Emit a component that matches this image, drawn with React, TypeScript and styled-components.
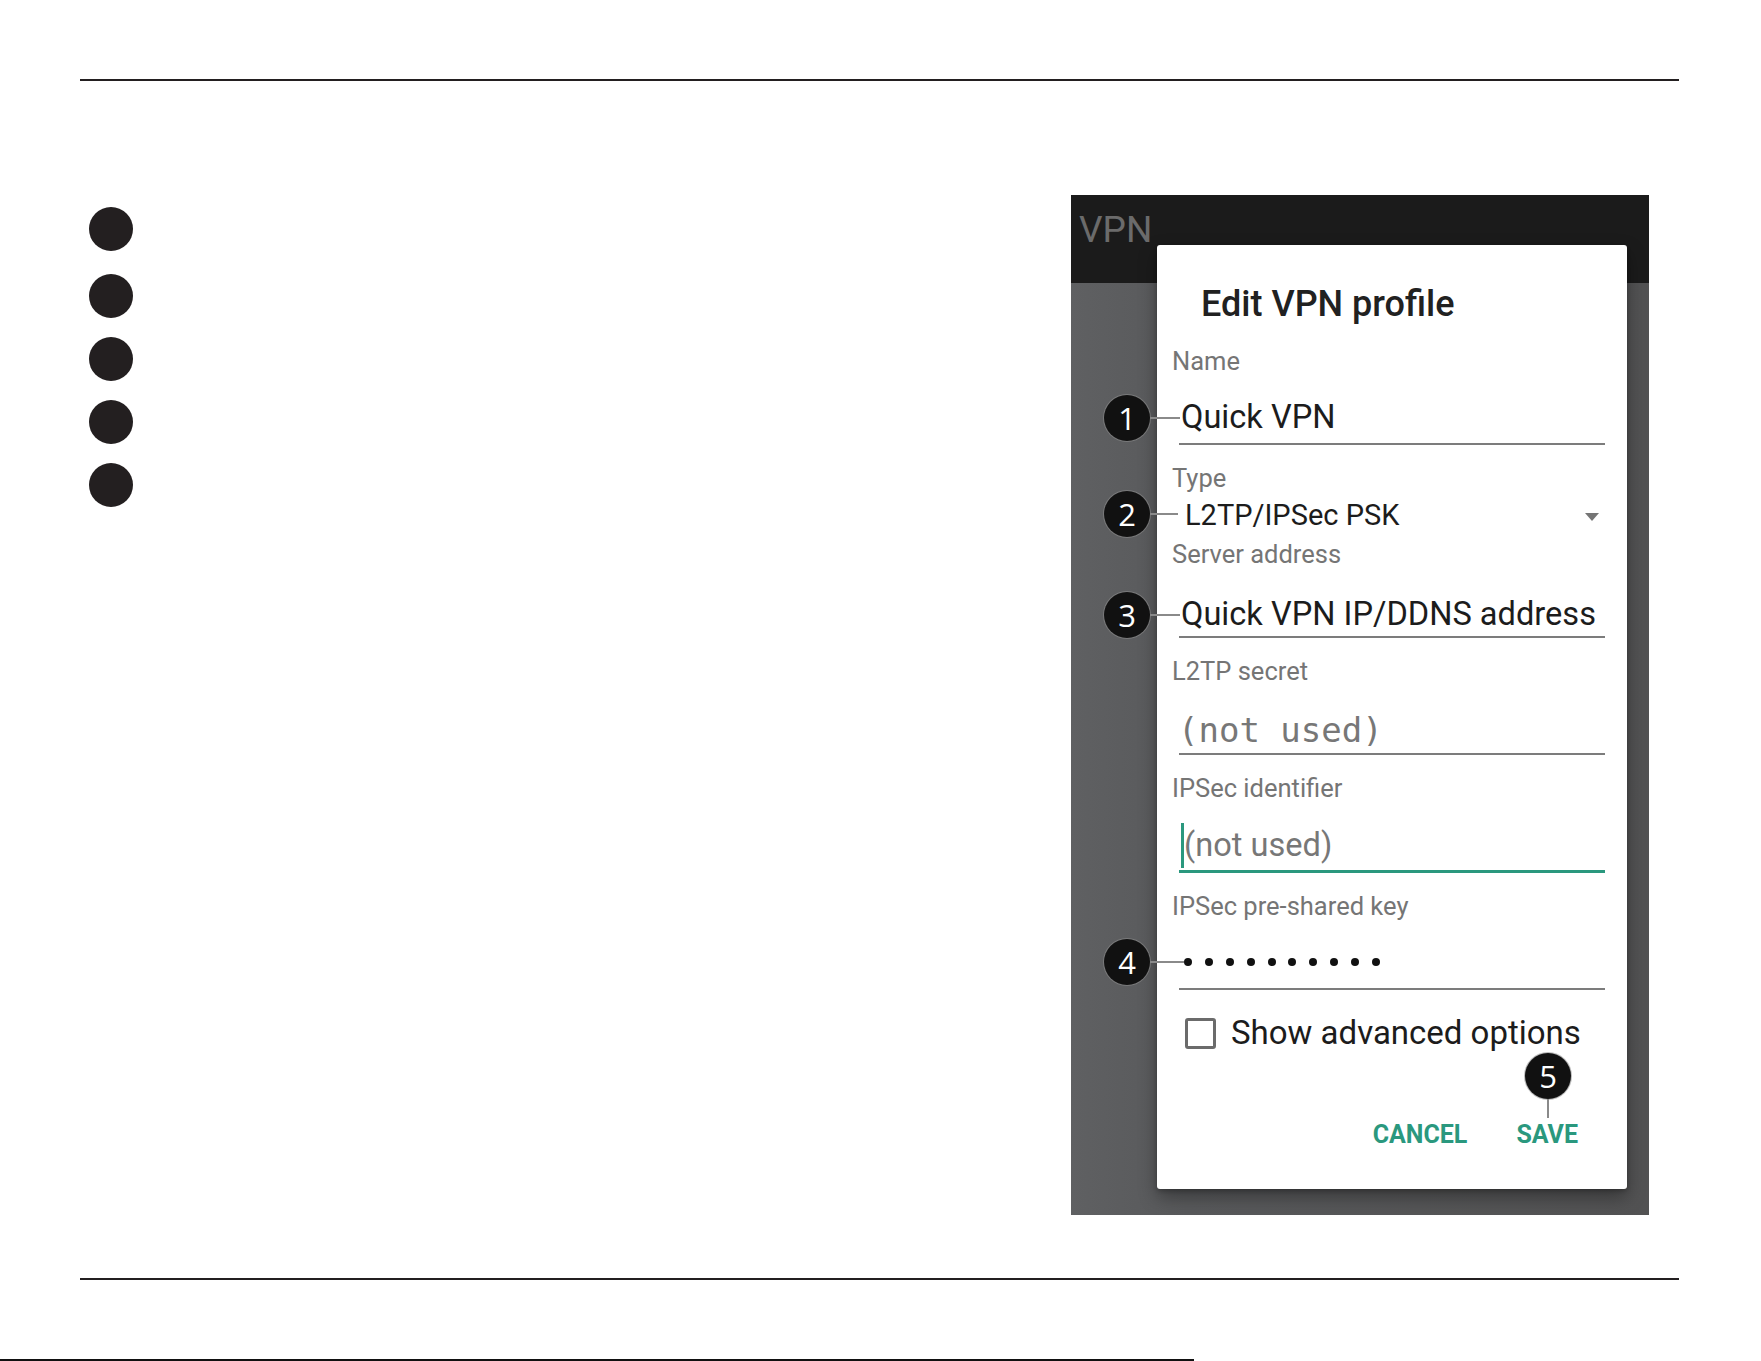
import styled, { createGlobalStyle } from "styled-components"

const GlobalStyle = createGlobalStyle`
  html, body {
    margin: 0;
    padding: 0;
    background: #fff;
  }
  body {
    font-family: Roboto, "Liberation Sans", sans-serif;
  }
`

const teal = "#2a987e"

const Sheet = styled.div`
  width: 1761px;
  height: 1361px;
  display: flex;
  flex-direction: column;
  overflow: hidden;
  background: #fff;
`

const Frame = styled.div`
  padding: 79px 82px 0 80px;
  display: flex;
  flex-direction: column;
`

const Rule = styled.div<{ $gap?: number }>`
  height: 2px;
  background: #231f20;
  margin-top: ${(p) => p.$gap ?? 0}px;
`

const Body = styled.div`
  display: flex;
  justify-content: space-between;
  align-items: flex-start;
  margin-top: 114px;
`

const StepList = styled.div`
  display: flex;
  flex-direction: column;
  gap: 19px;
  padding: 12px 0 0 9px;
`

const StepDot = styled.div`
  width: 44px;
  height: 44px;
  border-radius: 50%;
  background: #231f20;

  &:first-child {
    margin-bottom: 4px;
  }
`

/* phone screenshot */
const Shot = styled.div`
  position: relative;
  width: 578px;
  height: 1020px;
  margin-right: 30px;
  display: flex;
  flex-direction: column;
  background: linear-gradient(to right, #5f6062 0%, #58595b 20%, #525253 100%);
`

const AppBar = styled.div`
  height: 88px;
  flex: 0 0 auto;
  background: #1b1b1b;
  padding: 16px 0 0 8px;
  box-sizing: border-box;
`

const AppTitle = styled.div`
  font-size: 37px;
  line-height: 37px;
  color: #6b6b6b;
`

const Dialog = styled.div`
  position: absolute;
  left: 86px;
  top: 50px;
  width: 470px;
  height: 944px;
  box-sizing: border-box;
  padding: 41px 22px 0 15px;
  background: #fff;
  border-radius: 3px;
  box-shadow: 0 8px 18px rgba(0, 0, 0, 0.35), 0 2px 4px rgba(0, 0, 0, 0.2);
  display: flex;
  flex-direction: column;
`

const DialogTitle = styled.div`
  font-size: 36px;
  line-height: 36px;
  font-weight: 500;
  color: #212121;
  margin: 0 0 27px 29px;
`

const Field = styled.div`
  margin-bottom: 21px;
`

const Label = styled.div`
  font-size: 25.5px;
  line-height: 25px;
  color: #757575;
`

const InputBox = styled.div<{ $focused?: boolean; $pad?: number }>`
  margin-left: 7px;
  height: ${(p) => (p.$focused ? 72 : 71)}px;
  box-sizing: border-box;
  padding: 0 0 ${(p) => p.$pad ?? 10}px 2px;
  display: flex;
  align-items: flex-end;
  border-bottom: ${(p) => (p.$focused ? `3px solid ${teal}` : "2px solid #7c7c7c")};
`

const Value = styled.div<{ $muted?: boolean; $mono?: boolean }>`
  font-size: ${(p) => (p.$mono ? 34 : 32.6)}px;
  line-height: 32px;
  white-space: nowrap;
  color: ${(p) => (p.$muted ? "#777" : "#1c1c1c")};
  margin-left: ${(p) => (p.$mono ? -3 : 0)}px;
  font-family: ${(p) =>
    p.$mono ? `"DejaVu Sans Mono", "Liberation Mono", monospace` : "inherit"};
`

const Caret = styled.span`
  width: 3px;
  height: 45px;
  margin-bottom: -7px;
  background: ${teal};
  flex: 0 0 auto;
`

const TypeRow = styled.div`
  margin: 10px 6px 12px 13px;
  display: flex;
  align-items: center;
  justify-content: space-between;
  font-size: 29px;
  line-height: 29px;
  color: #1c1c1c;
`

const DropArrow = styled.span`
  width: 0;
  height: 0;
  border-left: 7px solid transparent;
  border-right: 7px solid transparent;
  border-top: 8px solid #757575;
  margin-top: 2px;
`

const DotRow = styled.div`
  height: 32px;
  display: flex;
  align-items: center;
  gap: 12.9px;
  padding-left: 3px;
`

const Dot = styled.span`
  width: 8px;
  height: 8px;
  border-radius: 50%;
  background: #111;
`

const CheckRow = styled.div`
  margin: 6px 0 0 13px;
  display: flex;
  align-items: center;
  gap: 15px;
  font-size: 33px;
  line-height: 32px;
  color: #1c1c1c;
`

const CheckBox = styled.span`
  width: 31px;
  height: 31px;
  box-sizing: border-box;
  border: 3px solid #6b6b6b;
  border-radius: 3px;
`

const Actions = styled.div`
  margin-top: 73px;
  padding-right: 27px;
  display: flex;
  justify-content: flex-end;
  gap: 49px;
`

const ActionButton = styled.span`
  font-size: 25px;
  line-height: 25px;
  font-weight: 700;
  color: ${teal};
`

/* numbered call-outs laid over the screenshot */
const Callout = styled.span<{ $x: number; $y: number; $lead: number; $down?: boolean }>`
  position: absolute;
  left: ${(p) => p.$x}px;
  top: ${(p) => p.$y}px;
  width: 46px;
  height: 46px;
  border-radius: 50%;
  background: #111;
  box-shadow: 0 0 0 1px rgba(140, 140, 140, 0.6);
  color: #fff;
  font-family: "Open Sans", "Liberation Sans", sans-serif;
  font-size: 31px;
  line-height: 46px;
  text-align: center;

  &::after {
    content: "";
    position: absolute;
    background: #8a8a8a;
    ${(p) =>
      p.$down
        ? `left: 22px; top: 100%; width: 2px; height: ${p.$lead}px;`
        : `left: 100%; top: 22px; height: 2px; width: ${p.$lead}px;`}
  }
`

const EdgeLine = styled.div`
  margin-top: auto;
  width: 1194px;
  height: 2px;
  background: #111;
`

const steps = [1, 2, 3, 4, 5]

const callouts = [
  { n: 1, x: 33, y: 200, lead: 30 },
  { n: 2, x: 33, y: 296, lead: 28 },
  { n: 3, x: 33, y: 397, lead: 30 },
  { n: 4, x: 33, y: 744, lead: 34 },
  { n: 5, x: 454, y: 858, lead: 19, down: true },
]

export default function App() {
  return (
    <>
      <GlobalStyle />
      <Sheet>
        <Frame>
          <Rule />
          <Body>
            <StepList>
              {steps.map((s) => (
                <StepDot key={s} />
              ))}
            </StepList>

            <Shot>
              <AppBar>
                <AppTitle>VPN</AppTitle>
              </AppBar>

              <Dialog>
                <DialogTitle>Edit VPN profile</DialogTitle>

                <Field>
                  <Label>Name</Label>
                  <InputBox>
                    <Value>Quick VPN</Value>
                  </InputBox>
                </Field>

                <Label>Type</Label>
                <TypeRow>
                  <span>L2TP/IPSec PSK</span>
                  <DropArrow />
                </TypeRow>

                <Field>
                  <Label>Server address</Label>
                  <InputBox $pad={6}>
                    <Value>Quick VPN IP/DDNS address</Value>
                  </InputBox>
                </Field>

                <Field>
                  <Label>L2TP secret</Label>
                  <InputBox $pad={7}>
                    <Value $muted $mono>(not used)</Value>
                  </InputBox>
                </Field>

                <Field>
                  <Label>IPSec identifier</Label>
                  <InputBox $focused $pad={9}>
                    <Caret />
                    <Value $muted>(not used)</Value>
                  </InputBox>
                </Field>

                <Field>
                  <Label>IPSec pre-shared key</Label>
                  <InputBox>
                    <DotRow>
                      {Array.from({ length: 10 }, (_, i) => (
                        <Dot key={i} />
                      ))}
                    </DotRow>
                  </InputBox>
                </Field>

                <CheckRow>
                  <CheckBox />
                  <span>Show advanced options</span>
                </CheckRow>

                <Actions>
                  <ActionButton>CANCEL</ActionButton>
                  <ActionButton>SAVE</ActionButton>
                </Actions>
              </Dialog>

              {callouts.map((c) => (
                <Callout key={c.n} $x={c.x} $y={c.y} $lead={c.lead} $down={c.down}>
                  {c.n}
                </Callout>
              ))}
            </Shot>
          </Body>
          <Rule $gap={63} />
        </Frame>
        <EdgeLine />
      </Sheet>
    </>
  )
}
